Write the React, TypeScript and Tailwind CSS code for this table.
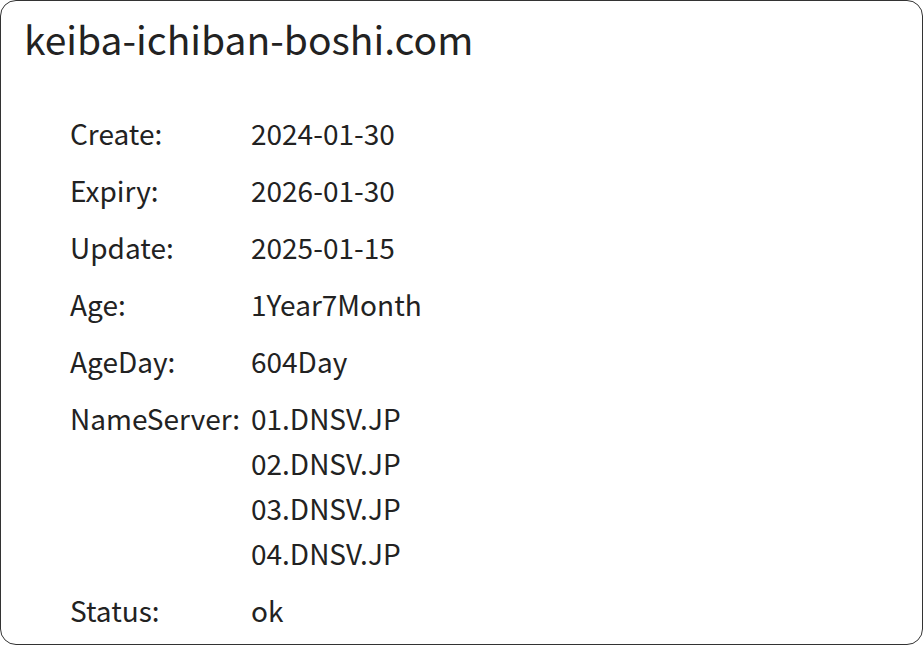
import React from 'react';

const ROWS: { label: string; values: string[] }[] = [
  { label: 'Create:', values: ['2024-01-30'] },
  { label: 'Expiry:', values: ['2026-01-30'] },
  { label: 'Update:', values: ['2025-01-15'] },
  { label: 'Age:', values: ['1Year7Month'] },
  { label: 'AgeDay:', values: ['604Day'] },
  { label: 'NameServer:', values: ['01.DNSV.JP', '02.DNSV.JP', '03.DNSV.JP', '04.DNSV.JP'] },
  { label: 'Status:', values: ['ok'] },
];

export default function App() {
  return (
    <div className="w-[923px] h-[645px] bg-white font-['Noto_Sans_CJK_JP','Noto_Sans',sans-serif] text-[#222]">
      <div className="w-[923px] h-[645px] border border-[#333] rounded-[16px] px-[23px] pt-[10px]">
        <h1 className="text-[39px] leading-[54px] text-[#222]">keiba-ichiban-boshi.com</h1>
        <div className="mt-[46px] ml-[46px] flex flex-col gap-[12px] text-[28px] leading-[45px]">
          {ROWS.map((r) => (
            <div key={r.label} className="grid grid-cols-[181px_1fr]">
              <div>{r.label}</div>
              <div className="flex flex-col">
                {r.values.map((v) => (
                  <div key={v}>{v}</div>
                ))}
              </div>
            </div>
          ))}
        </div>
      </div>
    </div>
  );
}
